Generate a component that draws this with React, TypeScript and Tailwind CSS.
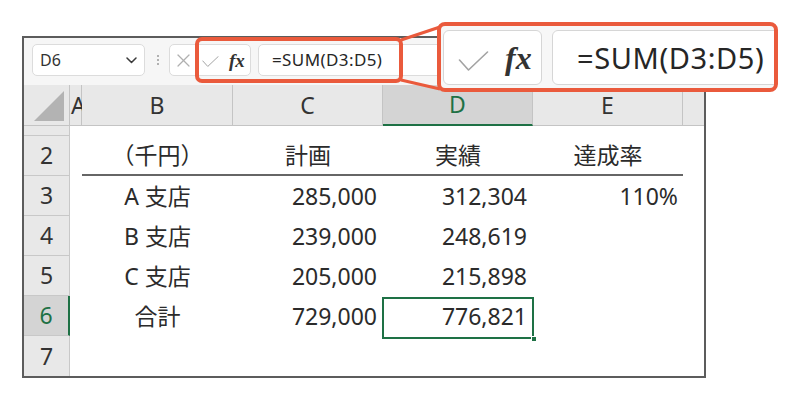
import React from "react";

function Check({ w, h, sw }: { w: number; h: number; sw: number }) {
  return (
    <svg width={w} height={h} viewBox="0 0 30 20" fill="none" stroke="#a3a3a3" strokeWidth={sw} strokeLinecap="round" strokeLinejoin="round">
      <polyline points="1,9 10,19 29,1" />
    </svg>
  );
}

function XIcon() {
  return (
    <svg width="13" height="13" viewBox="0 0 13 13" fill="none" stroke="#b0b0b0" strokeWidth="1.2" strokeLinecap="round">
      <line x1="1" y1="1" x2="12" y2="12" />
      <line x1="12" y1="1" x2="1" y2="12" />
    </svg>
  );
}

function Chevron() {
  return (
    <svg width="11" height="7" viewBox="0 0 11 7" fill="none" stroke="#3a3a3a" strokeWidth="1.5" strokeLinecap="round" strokeLinejoin="round">
      <polyline points="1,1 5.5,5.5 10,1" />
    </svg>
  );
}

type Row = { n: number; b: string; c: string; d: string; e: string };

const rows: Row[] = [
  { n: 3, b: "A 支店", c: "285,000", d: "312,304", e: "110%" },
  { n: 4, b: "B 支店", c: "239,000", d: "248,619", e: "" },
  { n: 5, b: "C 支店", c: "205,000", d: "215,898", e: "" },
  { n: 6, b: "合計", c: "729,000", d: "776,821", e: "" },
  { n: 7, b: "", c: "", d: "", e: "" },
];

export default function App() {
  return (
    <div className="relative w-[800px] h-[403px] bg-white overflow-hidden font-['Noto_Sans','Noto_Sans_CJK_JP',sans-serif] text-[#2b2b2b]">
      <div className="ml-[22px] mt-[36px] w-[684px] h-[342px] border-2 border-[#5c5c5c] flex flex-col">
        {/* toolbar */}
        <div className="h-[47px] bg-[#f6f6f6] flex items-start pt-[6px] pl-[8px]">
          <div className="w-[113px] h-[32px] bg-white border border-[#dcdcdc] rounded-[5px] flex items-center justify-between pl-[7px] pr-[7px]">
            <span className="text-[16px] leading-none text-[#333]">D6</span>
            <Chevron />
          </div>
          <div className="ml-[12px] mr-[10px] h-[32px] w-[2px] flex flex-col justify-center gap-[2px]">
            <div className="w-[2px] h-[2px] bg-[#9a9a9a] rounded-full" />
            <div className="w-[2px] h-[2px] bg-[#9a9a9a] rounded-full" />
            <div className="w-[2px] h-[2px] bg-[#9a9a9a] rounded-full" />
          </div>
          <div className="w-[82px] h-[32px] bg-white border border-[#dcdcdc] rounded-[5px] flex items-center pl-[7px]">
            <XIcon />
            <div className="ml-[12px] mt-[3px] flex">
              <Check w={17} h={11} sw={1.8} />
            </div>
            <span className="ml-[10px] font-['Liberation_Serif',serif] italic font-bold text-[19px] leading-none text-[#333]">fx</span>
          </div>
          <div className="ml-[7px] w-[440px] h-[32px] bg-white border border-[#dcdcdc] rounded-[5px] flex items-center pl-[13px] text-[17px] tracking-[0.4px] text-[#262626]">
            =SUM(D3:D5)
          </div>
        </div>

        {/* sheet grid */}
        <div className="grid grid-cols-[46px_12px_151px_150px_150px_150px_21px] grid-rows-[41px_10px_repeat(6,40px)] text-[23px] leading-none">
          {/* header row */}
          <div className="bg-[#e8e8e8] border-r border-b border-[#c4c4c4] flex items-end justify-end pr-[5px] pb-[4px]">
            <svg width="30" height="30" viewBox="0 0 30 30">
              <polygon points="0,30 30,30 30,0" fill="#b3b3b3" />
            </svg>
          </div>
          <div className="bg-[#e8e8e8] border-r border-b border-[#c4c4c4] flex items-center pl-[1px] text-[#333]">A</div>
          <div className="bg-[#e8e8e8] border-r border-b border-[#c4c4c4] flex items-center justify-center text-[#333]">B</div>
          <div className="bg-[#e8e8e8] border-r border-b border-[#c4c4c4] flex items-center justify-center text-[#333]">C</div>
          <div className="bg-[#d4d4d4] border-r border-[#c4c4c4] border-b-2 border-b-[#1e7145] flex items-center justify-center text-[#1e7145]">D</div>
          <div className="bg-[#e8e8e8] border-r border-b border-[#c4c4c4] flex items-center justify-center text-[#333]">E</div>
          <div className="bg-[#e8e8e8] border-b border-[#c4c4c4]" />

          {/* row 1 (short) */}
          <div className="bg-[#e8e8e8] border-r border-b border-[#c8c8c8]" />
          <div className="col-span-6 bg-white" />

          {/* row 2 */}
          <div className="bg-[#e8e8e8] border-r border-b border-[#c8c8c8] flex items-center justify-center text-[#333]">2</div>
          <div className="bg-white" />
          <div className="bg-white border-b-2 border-[#666] flex items-center justify-center [font-feature-settings:'halt']">（千円）</div>
          <div className="bg-white border-b-2 border-[#666] flex items-center justify-center">計画</div>
          <div className="bg-white border-b-2 border-[#666] flex items-center justify-center">実績</div>
          <div className="bg-white border-b-2 border-[#666] flex items-center justify-center">達成率</div>
          <div className="bg-white" />

          {rows.map((r) => {
            const sel = r.n === 6;
            return (
              <React.Fragment key={r.n}>
                <div
                  className={
                    sel
                      ? "bg-[#d4d4d4] border-b border-[#c8c8c8] border-r-2 border-r-[#1e7145] flex items-center justify-center text-[#1e7145]"
                      : r.n === 7
                      ? "bg-[#e8e8e8] border-r border-[#c8c8c8] flex items-center justify-center text-[#333]"
                      : "bg-[#e8e8e8] border-r border-b border-[#c8c8c8] flex items-center justify-center text-[#333]"
                  }
                >
                  {r.n}
                </div>
                <div className="bg-white" />
                <div className="bg-white flex items-center justify-center">{r.b}</div>
                <div className="bg-white flex items-center justify-end pr-[6px]">{r.c}</div>
                {sel ? (
                  <div className="relative z-10 bg-white flex items-center justify-end pr-[6px]">
                    {r.d}
                    <div className="absolute left-[-1px] top-[1px] right-[-1px] bottom-[-3px] border-2 border-[#1e7145]" />
                    <div className="absolute right-[-4px] bottom-[-6px] w-[6px] h-[6px] bg-[#1e7145] border border-white" />
                  </div>
                ) : (
                  <div className="bg-white flex items-center justify-end pr-[6px]">{r.d}</div>
                )}
                <div className="bg-white flex items-center justify-end pr-[5px]">{r.e}</div>
                <div className="bg-white" />
              </React.Fragment>
            );
          })}
        </div>
      </div>

      {/* small highlight box */}
      <div className="absolute left-[195px] top-[37px] w-[208px] h-[46px] border-4 border-[#ea5a3c] rounded-[7px] z-20" />

      {/* connector lines */}
      <svg className="absolute left-0 top-0 pointer-events-none z-20" width="800" height="403" viewBox="0 0 800 403">
        <line x1="401" y1="40" x2="440" y2="27" stroke="#ea5a3c" strokeWidth="3" />
        <line x1="401" y1="80" x2="440" y2="89" stroke="#ea5a3c" strokeWidth="3" />
      </svg>

      {/* magnified callout */}
      <div className="absolute z-30 left-[437px] top-[22px] w-[341px] h-[70px] border-4 border-[#ea5a3c] rounded-[8px] bg-[#f7f7f7] overflow-hidden flex items-start pt-[4px] pl-[2px]">
        <div className="shrink-0 w-[99px] h-[55px] bg-white border border-[#d6d6d6] rounded-[6px] flex items-center pl-[14px]">
          <div className="mt-[6px] flex">
            <Check w={31} h={20} sw={1.6} />
          </div>
          <span className="ml-[16px] font-['Liberation_Serif',serif] italic font-bold text-[32px] leading-none text-[#333]">fx</span>
        </div>
        <div className="shrink-0 ml-[10px] w-[260px] h-[55px] bg-white border border-[#d6d6d6] rounded-[6px] flex items-center pl-[24px] text-[29px] tracking-[0.6px] text-[#262626]">
          =SUM(D3:D5)
        </div>
      </div>
    </div>
  );
}
